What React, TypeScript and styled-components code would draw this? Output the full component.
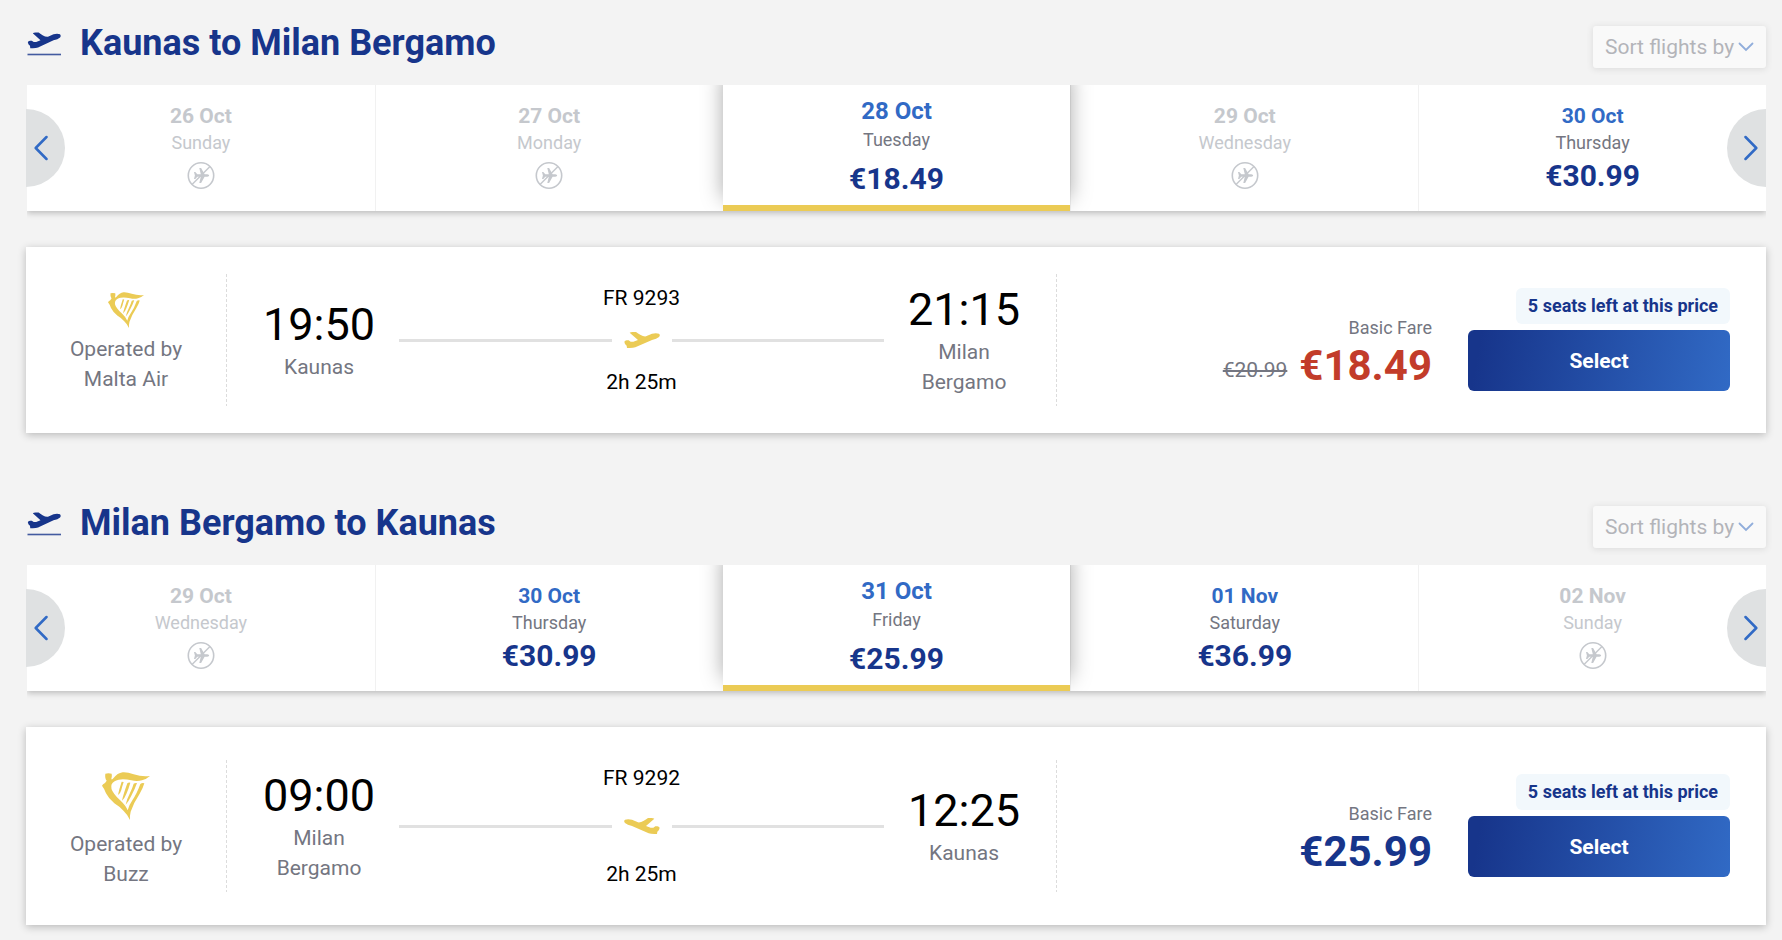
import React from "react";
import styled, { createGlobalStyle } from "styled-components";

const color = {
  page: "#f3f3f3",
  navy: "#17358b",
  blue: "#316ac5",
  yellow: "#ebcb55",
  red: "#c23c2a",
  grey: "#747681",
  muted: "#c5c8cd",
  line: "#e1e1e1",
};

const GlobalStyle = createGlobalStyle`
  * { box-sizing: border-box; }
  body {
    margin: 0;
    background: ${color.page};
    font-family: Roboto, "Liberation Sans", sans-serif;
  }
  button, select { font: inherit; }
`;

const Page = styled.main`
  padding: 0 16px 0 26px;
`;

const Journey = styled.section`
  display: flex;
  flex-direction: column;
  padding-bottom: 47px;
`;

const Header = styled.header`
  display: flex;
  justify-content: space-between;
  align-items: center;
  height: 86px;
  margin-bottom: -1px;
`;

const Heading = styled.div`
  display: flex;
  align-items: center;
  gap: 18px;
`;

const Title = styled.h2`
  margin: 0;
  color: ${color.navy};
  font-size: 36px;
  line-height: 48px;
  font-weight: 700;
`;

const SortBox = styled.div`
  display: grid;
  align-items: center;
  margin-top: 8px;
  border-radius: 3px;
  background: #ffffff;
  box-shadow: 0 1px 6px rgba(0, 0, 0, 0.2);
  opacity: 0.5;

  > * {
    grid-area: 1 / 1;
  }
  > svg {
    justify-self: end;
    margin-right: 12px;
    pointer-events: none;
  }
`;

const SortSelect = styled.select`
  appearance: none;
  height: 42px;
  padding: 0 31px 0 12px;
  border: 0;
  background: transparent;
  color: ${color.grey};
  font-size: 21px;

  &:disabled {
    opacity: 1;
  }
`;

const Carousel = styled.nav`
  position: relative;
  padding-left: 1px;
`;

const DateList = styled.ul`
  display: grid;
  grid-template-columns: repeat(5, 1fr);
  margin: 0;
  padding: 0;
  list-style: none;
  overflow: hidden;
  background: #ffffff;
`;

const DateStrip = styled.div`
  box-shadow: 0 2px 6px rgba(0, 0, 0, 0.24);
  clip-path: inset(0 0 -12px 0);
`;

const DateItem = styled.li<{ $selected: boolean }>`
  display: flex;
  position: relative;
  z-index: ${(p) => (p.$selected ? 1 : 0)};
  border-left: ${(p) => (p.$selected ? "0" : "1px solid #f1f1f1")};

  &:first-child {
    border-left: 0;
  }
`;

const DateButton = styled.button<{ $selected: boolean }>`
  display: flex;
  flex: 1;
  flex-direction: column;
  align-items: center;
  justify-content: center;
  height: 126px;
  padding: ${(p) => (p.$selected ? "3px 0 0" : "0")};
  border: 0;
  border-bottom: ${(p) => (p.$selected ? `6px solid ${color.yellow}` : "0")};
  background: #ffffff;
  box-shadow: ${(p) => (p.$selected ? "0 -12px 20px rgba(0, 0, 0, 0.34)" : "none")};
`;

const DateText = styled.span<{ $selected: boolean; $muted: boolean }>`
  color: ${(p) => (p.$muted ? color.muted : color.blue)};
  font-size: ${(p) => (p.$selected ? 24 : 21)}px;
  line-height: ${(p) => (p.$selected ? 33 : 30)}px;
  font-weight: 700;
`;

const DayText = styled.span<{ $muted: boolean }>`
  color: ${(p) => (p.$muted ? color.muted : color.grey)};
  font-size: 18px;
  line-height: 24px;
`;

const DayPrice = styled.span<{ $selected: boolean }>`
  display: flex;
  align-items: center;
  height: 40px;
  margin-top: ${(p) => (p.$selected ? 6 : 0)}px;
  color: ${color.navy};
  font-size: 30px;
  font-weight: 700;
`;

const ArrowButton = styled.button<{ $side: "left" | "right" }>`
  position: absolute;
  z-index: 2;
  top: 24px;
  ${(p) => p.$side}: 0;
  display: flex;
  align-items: center;
  justify-content: ${(p) => (p.$side === "left" ? "flex-start" : "flex-end")};
  width: 39px;
  height: 78px;
  padding: 0 8px;
  border: 0;
  border-radius: ${(p) => (p.$side === "left" ? "0 39px 39px 0" : "39px 0 0 39px")};
  background: #dfe1e2;
`;

const Card = styled.article`
  display: flex;
  align-items: stretch;
  margin-top: 36px;
  background: #ffffff;
  box-shadow: 0 2px 8px rgba(0, 0, 0, 0.24);
`;

const Divider = styled.div`
  align-self: center;
  height: 132px;
  width: 1px;
  background: repeating-linear-gradient(#dcdcdc 0 3px, transparent 3px 5px);
`;

const Operator = styled.div`
  display: flex;
  flex: 0 0 200px;
  flex-direction: column;
  align-items: center;
  justify-content: center;
  padding: 36px;
  color: ${color.grey};
  font-size: 21px;
  line-height: 30px;
  text-align: center;
`;

const LogoBox = styled.div<{ $large: boolean }>`
  display: flex;
  padding: ${(p) => (p.$large ? 9 : 6)}px;
`;

const Route = styled.div`
  display: flex;
  flex: 757 1 0;
  align-items: center;
  gap: 24px;
  padding: 36px;
`;

const Stop = styled.div`
  display: flex;
  flex-direction: column;
  align-items: center;
  width: 112px;
  color: ${color.grey};
  font-size: 21px;
  line-height: 30px;
  text-align: center;
`;

const Time = styled.time`
  color: #000000;
  font-size: 45px;
  line-height: 54px;
`;

const Flight = styled.div`
  display: flex;
  flex: 1;
  flex-direction: column;
  align-self: stretch;
  align-items: stretch;
  justify-content: space-between;
  color: #000000;
  font-size: 21px;
  line-height: 30px;
  text-align: center;
`;

const Track = styled.div`
  display: flex;
  align-items: center;
  gap: 12px;

  &::before,
  &::after {
    content: "";
    flex: 1;
    height: 3px;
    background: ${color.line};
  }
`;

const Fare = styled.div`
  display: flex;
  flex: 637 1 0;
  align-items: center;
  justify-content: flex-end;
  padding: 0 36px 1px;
`;

const FareRow = styled.div`
  display: flex;
  align-items: flex-end;
  gap: 36px;
`;

const PriceBlock = styled.div`
  display: flex;
  flex-direction: column;
  align-items: flex-end;
`;

const FareName = styled.span`
  color: ${color.grey};
  font-size: 18px;
  line-height: 27px;
`;

const PriceLine = styled.div`
  display: flex;
  align-items: flex-end;
  gap: 12px;
`;

const OldPrice = styled.s`
  color: ${color.grey};
  font-size: 21px;
  line-height: 42px;
`;

const Price = styled.strong<{ $reduced: boolean }>`
  color: ${(p) => (p.$reduced ? color.red : color.navy)};
  font-size: 42px;
  line-height: 50px;
  font-weight: 700;
`;

const Action = styled.div`
  display: flex;
  flex-direction: column;
  align-items: flex-end;
  gap: 6px;
`;

const Badge = styled.span`
  padding: 6px 12px;
  border-radius: 6px;
  background: #f2f8fc;
  color: ${color.navy};
  font-size: 18px;
  line-height: 24px;
  font-weight: 700;
`;

const SelectButton = styled.button`
  width: 262px;
  height: 61px;
  border: 0;
  border-radius: 6px;
  background: linear-gradient(100deg, ${color.navy} 5%, ${color.blue});
  color: #ffffff;
  font-size: 21px;
  font-weight: 700;
`;

const PLANE =
  "M1 30Q3 27 8 26L14 26L20 30L28 30L42 25L17 3Q20 1 26 1L36 1Q42 6 50 10Q58 15 66 14L84 6Q96 3 105 6Q110 11 105 16Q98 22 84 25L34 47Q26 50 9 49L8 42L3 37Z";

const TakeoffIcon = () => (
  <svg width="36" height="36" viewBox="0 0 36 36" aria-hidden="true">
    <path d={PLANE} fill={color.navy} transform="translate(1.5 7.2) scale(.31 .325)" />
    <rect x="1.5" y="28.7" width="33.5" height="1.6" fill={color.navy} opacity=".8" />
  </svg>
);

const PlaneIcon = ({ mirrored }: { mirrored: boolean }) => (
  <svg width="36" height="18" viewBox="0 0 108 54" aria-hidden="true">
    <path d={PLANE} fill={color.yellow} transform={mirrored ? "translate(108 2) scale(-1 1)" : "translate(0 2)"} />
  </svg>
);

const NoFlightIcon = () => (
  <svg width="28" height="28" viewBox="0 0 28 28" fill="none" stroke={color.muted} role="img" aria-label="No flights">
    <circle cx="14" cy="14.500" r="12.700" strokeWidth="1.600" />
    <path d="M5 23.500L23 5.500" strokeWidth="1.500" />
    <path
      fill={color.muted}
      stroke="none"
      d="M7 11h1.300l2 2.200h3.500L12.300 7h1.800L17.600 13.200h2.700q1.900.3 1.900 1.300t-1.900 1.300h-2.700L14.100 22h-1.800L13.800 15.800h-3.500l-2 2.200H7L7.900 14.500Z"
    />
  </svg>
);

const Chevron = ({ direction }: { direction: "left" | "right" }) => (
  <svg width="14" height="26" viewBox="0 0 14 26" fill="none" stroke={color.blue} strokeWidth="2.500" strokeLinecap="round" strokeLinejoin="round" aria-hidden="true">
    <path d={direction === "left" ? "M12.500 2L1.700 13L12.500 24" : "M1.500 2L12.300 13L1.500 24"} />
  </svg>
);

const ChevronDown = () => (
  <svg width="16" height="10" viewBox="0 0 16 10" fill="none" stroke={color.blue} strokeWidth="1.800" strokeLinecap="round" aria-hidden="true">
    <path d="M1.500 1.500L8 8L14.500 1.500" />
  </svg>
);

const HarpLogo = ({ size }: { size: number }) => (
  <svg width={size} height={size} viewBox="0 0 144 144" fill={color.yellow} role="img" aria-label="Ryanair">
    <path d="M10 5Q19 2 29 5Q31 13 28 21Q30 24 34 19Q46 3 62 1Q76 0 95 7Q120 15 144 12Q134 21 120 25Q105 29 88 25Q66 20 50 23Q34 26 29 37Q24 50 37 66Q44 76 56 86Q72 101 77 115Q80 100 92 83Q104 66 115 36Q120 32 127 34Q123 49 113 65Q95 92 86 119Q83 130 84 144Q75 126 65 117Q52 103 37 94Q20 80 12 64Q6 48 0 41Q2 36 9 33L14 26Q8 19 10 5Z" />
    <path d="M59 29L65 30Q60 45 58 54Q55 65 48 69Q51 52 59 29Z" />
    <path d="M76 34Q79 31 85 32Q80 50 73 66Q68 79 60 86Q64 67 76 34Z" />
    <path d="M95 35Q99 32 105 33Q98 53 88 71Q80 88 71 98Q74 82 84 63Q91 49 95 35Z" />
  </svg>
);

interface DayOption {
  date: string;
  day: string;
  price?: string;
  selected?: boolean;
}

interface Stopover {
  time: string;
  city: string;
}

interface JourneyData {
  title: string;
  days: DayOption[];
  operator: string;
  largeLogo: boolean;
  departure: Stopover;
  arrival: Stopover;
  flight: string;
  inbound: boolean;
  price: string;
  oldPrice?: string;
}

const journeys: JourneyData[] = [
  {
    title: "Kaunas to Milan Bergamo",
    days: [
      { date: "26 Oct", day: "Sunday" },
      { date: "27 Oct", day: "Monday" },
      { date: "28 Oct", day: "Tuesday", price: "€18.49", selected: true },
      { date: "29 Oct", day: "Wednesday" },
      { date: "30 Oct", day: "Thursday", price: "€30.99" },
    ],
    operator: "Malta Air",
    largeLogo: false,
    departure: { time: "19:50", city: "Kaunas" },
    arrival: { time: "21:15", city: "Milan Bergamo" },
    flight: "FR 9293",
    inbound: false,
    price: "€18.49",
    oldPrice: "€20.99",
  },
  {
    title: "Milan Bergamo to Kaunas",
    days: [
      { date: "29 Oct", day: "Wednesday" },
      { date: "30 Oct", day: "Thursday", price: "€30.99" },
      { date: "31 Oct", day: "Friday", price: "€25.99", selected: true },
      { date: "01 Nov", day: "Saturday", price: "€36.99" },
      { date: "02 Nov", day: "Sunday" },
    ],
    operator: "Buzz",
    largeLogo: true,
    departure: { time: "09:00", city: "Milan Bergamo" },
    arrival: { time: "12:25", city: "Kaunas" },
    flight: "FR 9292",
    inbound: true,
    price: "€25.99",
  },
];

const DayCell = ({ date, day, price, selected = false }: DayOption) => (
  <DateItem $selected={selected}>
    <DateButton type="button" $selected={selected} disabled={!price} aria-pressed={selected}>
      <DateText $selected={selected} $muted={!price}>{date}</DateText>
      <DayText $muted={!price}>{day}</DayText>
      <DayPrice $selected={selected}>{price ?? <NoFlightIcon />}</DayPrice>
    </DateButton>
  </DateItem>
);

const StopInfo = ({ time, city }: Stopover) => (
  <Stop>
    <Time>{time}</Time>
    <span>{city}</span>
  </Stop>
);

const JourneySection = ({ journey }: { journey: JourneyData }) => (
  <Journey>
    <Header>
      <Heading>
        <TakeoffIcon />
        <Title>{journey.title}</Title>
      </Heading>
      <SortBox>
        <SortSelect aria-label="Sort flights by" disabled>
          <option>Sort flights by</option>
        </SortSelect>
        <ChevronDown />
      </SortBox>
    </Header>

    <Carousel aria-label={`Dates, ${journey.title}`}>
      <DateStrip>
        <DateList>
          {journey.days.map((d) => (
            <DayCell key={d.date} {...d} />
          ))}
        </DateList>
      </DateStrip>
      <ArrowButton type="button" $side="left" aria-label="Earlier dates">
        <Chevron direction="left" />
      </ArrowButton>
      <ArrowButton type="button" $side="right" aria-label="Later dates">
        <Chevron direction="right" />
      </ArrowButton>
    </Carousel>

    <Card>
      <Operator>
        <LogoBox $large={journey.largeLogo}>
          <HarpLogo size={journey.largeLogo ? 48 : 36} />
        </LogoBox>
        <span>Operated by</span>
        <span>{journey.operator}</span>
      </Operator>
      <Divider />
      <Route>
        <StopInfo {...journey.departure} />
        <Flight>
          <span>{journey.flight}</span>
          <Track>
            <PlaneIcon mirrored={journey.inbound} />
          </Track>
          <span>2h 25m</span>
        </Flight>
        <StopInfo {...journey.arrival} />
      </Route>
      <Divider />
      <Fare>
        <FareRow>
          <PriceBlock>
            <FareName>Basic Fare</FareName>
            <PriceLine>
              {journey.oldPrice && <OldPrice>{journey.oldPrice}</OldPrice>}
              <Price $reduced={Boolean(journey.oldPrice)}>{journey.price}</Price>
            </PriceLine>
          </PriceBlock>
          <Action>
            <Badge>5 seats left at this price</Badge>
            <SelectButton type="button">Select</SelectButton>
          </Action>
        </FareRow>
      </Fare>
    </Card>
  </Journey>
);

export default function App() {
  return (
    <>
      <GlobalStyle />
      <Page>
        {journeys.map((j) => (
          <JourneySection key={j.title} journey={j} />
        ))}
      </Page>
    </>
  );
}
